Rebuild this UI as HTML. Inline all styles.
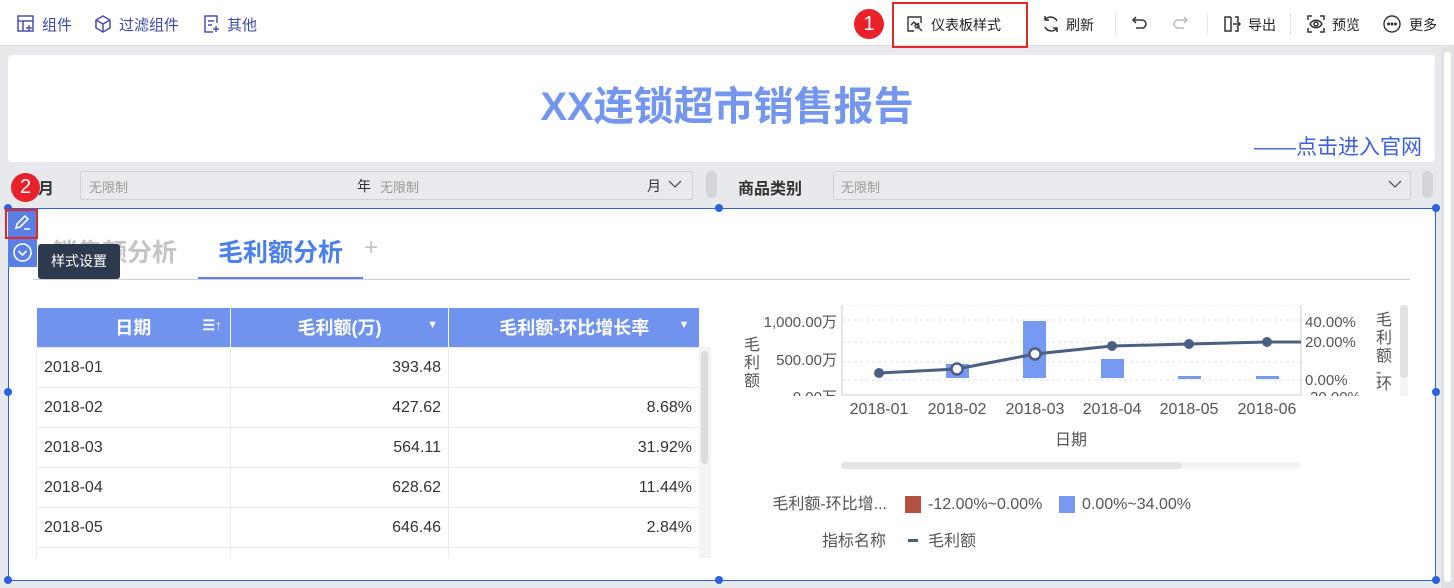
<!DOCTYPE html>
<html><head><meta charset="utf-8"><style>
*{margin:0;padding:0;box-sizing:border-box}
body{width:1454px;height:588px;background:#e8e9ed;font-family:"Liberation Sans","Noto Sans CJK SC",sans-serif;position:relative;overflow:hidden;color:#333}
.a{position:absolute;white-space:nowrap}
.tb{color:#3b4aa8;font-size:15px}
.tr{color:#222;font-size:14px}
.dot{position:absolute;width:8px;height:8px;border-radius:50%;background:#2a62e0}
td{border:1px solid #e6edf9;font-size:16px;color:#333;height:40px;padding:2px 7px 0}
</style></head><body>
<!-- toolbar -->
<div class="a" style="left:0;top:0;width:1454px;height:46px;background:#fff;border-bottom:1px solid #dcdde2"></div>
<svg class="a" style="left:17px;top:15px" width="18" height="18" viewBox="0 0 18 18" fill="none" stroke="#4a4fb0" stroke-width="1.5"><rect x="1" y="1" width="15" height="15"/><path d="M1 6h15M6 6v10M12 10v6M9 13h6"/></svg>
<div class="a tb" style="left:42px;top:14px">组件</div>
<svg class="a" style="left:94px;top:15px" width="18" height="18" viewBox="0 0 18 18" fill="none" stroke="#4a4fb0" stroke-width="1.5"><path d="M9 1l7 4v8l-7 4-7-4V5zM2 5l7 4 7-4M9 9v8"/></svg>
<div class="a tb" style="left:119px;top:14px">过滤组件</div>
<svg class="a" style="left:203px;top:15px" width="18" height="18" viewBox="0 0 18 18" fill="none" stroke="#4a4fb0" stroke-width="1.5"><path d="M14 8V1H2v16h8M5 6h6M5 10h4M13 11v6M10 14h6"/></svg>
<div class="a tb" style="left:227px;top:14px">其他</div>

<div class="a" style="left:854px;top:9px;width:30px;height:30px;border-radius:50%;background:#e8212a;color:#fff;font-size:20px;text-align:center;line-height:30px">1</div>
<div class="a" style="left:892px;top:2px;width:136px;height:46px;border:2px solid #e02a2a"></div>
<svg class="a" style="left:907px;top:16px" width="16" height="16" viewBox="0 0 16 16" fill="none" stroke="#333" stroke-width="1.4"><path d="M14 7V1H1v14h6M4 9l3-3 3 3 2-2M10 10l5 5"/><circle cx="10" cy="10" r="2"/></svg>
<div class="a tr" style="left:931px;top:15px">仪表板样式</div>
<svg class="a" style="left:1042px;top:15px" width="18" height="18" viewBox="0 0 18 18" fill="none" stroke="#333" stroke-width="1.5"><path d="M15 6A7 7 0 0 0 3 5M3 12a7 7 0 0 0 12 1M3 1v4h4M15 17v-4h-4"/></svg>
<div class="a tr" style="left:1066px;top:15px">刷新</div>
<div class="a" style="left:1115px;top:13px;width:1px;height:22px;background:#e4e4e4"></div>
<svg class="a" style="left:1131px;top:15px" width="18" height="18" viewBox="0 0 18 18" fill="none" stroke="#333" stroke-width="1.5"><path d="M5 2L2 5l3 3M2 5h9a4 4 0 0 1 0 8H5"/></svg>
<svg class="a" style="left:1171px;top:15px" width="18" height="18" viewBox="0 0 18 18" fill="none" stroke="#bbb" stroke-width="1.5"><path d="M13 2l3 3-3 3M16 5H7a4 4 0 0 0 0 8h6"/></svg>
<div class="a" style="left:1207px;top:13px;width:1px;height:22px;background:#e4e4e4"></div>
<svg class="a" style="left:1224px;top:15px" width="18" height="18" viewBox="0 0 18 18" fill="none" stroke="#333" stroke-width="1.5"><path d="M7 2H1v14h6V2M11 2h3v4M14 12v4h-3M9 9h7M13 6l3 3-3 3"/></svg>
<div class="a tr" style="left:1248px;top:15px">导出</div>
<div class="a" style="left:1290px;top:13px;width:1px;height:22px;background:#e4e4e4"></div>
<svg class="a" style="left:1307px;top:15px" width="18" height="18" viewBox="0 0 18 18" fill="none" stroke="#333" stroke-width="1.5"><path d="M1 5V1h4M13 1h4v4M17 13v4h-4M5 17H1v-4M3 9c3-5 9-5 12 0-3 5-9 5-12 0z"/><circle cx="9" cy="9" r="2"/></svg>
<div class="a tr" style="left:1332px;top:15px">预览</div>
<svg class="a" style="left:1383px;top:15px" width="18" height="18" viewBox="0 0 18 18" fill="none" stroke="#333" stroke-width="1.4"><circle cx="9" cy="9" r="8"/><circle cx="5.5" cy="9" r=".8" fill="#333"/><circle cx="9" cy="9" r=".8" fill="#333"/><circle cx="12.5" cy="9" r=".8" fill="#333"/></svg>
<div class="a tr" style="left:1409px;top:15px">更多</div>
<div class="a" style="left:1441px;top:47px;width:13px;height:541px;background:#dfe0e4"></div>
<div class="a" style="left:1444px;top:52px;width:7px;height:530px;background:#fff;border-radius:3px"></div>

<!-- title -->
<div class="a" style="left:8px;top:55px;width:1427px;height:107px;background:#fff;border-radius:4px"></div>
<div class="a" style="left:0;width:1454px;top:74px;text-align:center;font-size:40px;font-weight:bold;color:#7496ee">XX连锁超市销售报告</div>
<div class="a" style="right:32px;top:131px;font-size:21px;color:#3a5fe0">——点击进入官网</div>

<!-- filters -->
<div class="a" style="left:38px;top:175px;font-size:16px;font-weight:bold;color:#333">月</div>
<div class="a" style="left:80px;top:171px;width:613px;height:29px;border:1px solid #cfd1d6;border-radius:2px;background:#e9eaed"></div>
<div class="a" style="left:89px;top:177px;font-size:13px;color:#999">无限制</div>
<div class="a" style="left:357px;top:176px;font-size:14px;color:#333">年</div>
<div class="a" style="left:380px;top:177px;font-size:13px;color:#999">无限制</div>
<div class="a" style="left:647px;top:176px;font-size:14px;color:#333">月</div>
<svg class="a" style="left:668px;top:178px" width="14" height="12" viewBox="0 0 14 12" fill="none" stroke="#555" stroke-width="1.3"><path d="M1 3l6 6 6-6"/></svg>
<div class="a" style="left:706px;top:171px;width:11px;height:27px;border-radius:6px;background:#d4d5d9"></div>
<div class="a" style="left:738px;top:175px;font-size:16px;font-weight:bold;color:#333">商品类别</div>
<div class="a" style="left:833px;top:171px;width:578px;height:29px;border:1px solid #cfd1d6;border-radius:2px;background:#e9eaed"></div>
<div class="a" style="left:841px;top:177px;font-size:13px;color:#999">无限制</div>
<svg class="a" style="left:1388px;top:178px" width="14" height="12" viewBox="0 0 14 12" fill="none" stroke="#555" stroke-width="1.3"><path d="M1 3l6 6 6-6"/></svg>
<div class="a" style="left:1422px;top:171px;width:11px;height:27px;border-radius:6px;background:#d4d5d9"></div>
<div class="a" style="left:11px;top:173px;width:29px;height:29px;border-radius:50%;background:#e8212a;color:#fff;font-size:20px;text-align:center;line-height:29px">2</div>

<!-- main panel -->
<div class="a" style="left:8px;top:208px;width:1428px;height:373px;background:#fff;border:1px solid #2a62e0"></div>
<div class="dot" style="left:4px;top:204px"></div><div class="dot" style="left:715px;top:204px"></div><div class="dot" style="left:1432px;top:204px"></div>
<div class="dot" style="left:4px;top:388px"></div><div class="dot" style="left:1432px;top:388px"></div>
<div class="dot" style="left:4px;top:576px"></div><div class="dot" style="left:715px;top:576px"></div><div class="dot" style="left:1432px;top:576px"></div>

<!-- tabs -->
<div class="a" style="left:52px;top:233px;font-size:25px;font-weight:bold;color:#c4c4c4">销售额分析</div>
<div class="a" style="left:218px;top:233px;font-size:25px;font-weight:bold;color:#4a80ec">毛利额分析</div>
<div class="a" style="left:364px;top:234px;font-size:24px;color:#c4c4c4">+</div>
<div class="a" style="left:33px;top:279px;width:1377px;height:1px;background:#d0d0d0"></div>
<div class="a" style="left:198px;top:277px;width:165px;height:2px;background:#5a86ec"></div>

<!-- edit buttons & tooltip -->
<div class="a" style="left:8px;top:209px;width:29px;height:58px;background:#5a80e6"></div>
<div class="a" style="left:5px;top:209px;width:33px;height:30px;border:2px solid #e02a2a"></div>
<svg class="a" style="left:13px;top:213px" width="20" height="20" viewBox="0 0 20 20" fill="none" stroke="#fff" stroke-width="1.6"><path d="M3 15l1-4 8-8 3 3-8 8zM11 16h6"/></svg>
<svg class="a" style="left:12px;top:242px" width="21" height="21" viewBox="0 0 21 21" fill="none" stroke="#fff" stroke-width="1.6"><circle cx="10.5" cy="10.5" r="8.5"/><path d="M6.5 9l4 4 4-4"/></svg>
<div class="a" style="left:38px;top:244px;width:82px;height:35px;background:#2d3a4e;border-radius:3px;color:#fff;font-size:14px;line-height:35px;text-align:center">样式设置</div>

<!-- table -->
<div class="a" style="left:36px;top:308px;width:663px;height:250px;overflow:hidden">
<table style="border-collapse:collapse;width:663px;table-layout:fixed">
<colgroup><col style="width:194px"><col style="width:218px"><col style="width:251px"></colgroup>
<tr style="background:#7093ee;color:#fff;font-weight:bold;font-size:18px;height:39px">
<th style="position:relative;border-right:1px solid #fff">日期<span style="position:absolute;right:8px;top:9px;font-size:14px">☰↑</span></th>
<th style="position:relative;border-right:1px solid #fff">毛利额(万)<span style="position:absolute;right:10px;top:11px;font-size:11px">▼</span></th>
<th style="position:relative">毛利额-环比增长率<span style="position:absolute;right:10px;top:11px;font-size:11px">▼</span></th></tr>
<tr><td>2018-01</td><td style="text-align:right">393.48</td><td></td></tr>
<tr><td>2018-02</td><td style="text-align:right">427.62</td><td style="text-align:right">8.68%</td></tr>
<tr><td>2018-03</td><td style="text-align:right">564.11</td><td style="text-align:right">31.92%</td></tr>
<tr><td>2018-04</td><td style="text-align:right">628.62</td><td style="text-align:right">11.44%</td></tr>
<tr><td>2018-05</td><td style="text-align:right">646.46</td><td style="text-align:right">2.84%</td></tr>
<tr><td></td><td></td><td></td></tr>
</table></div>
<div class="a" style="left:699px;top:347px;width:12px;height:211px;background:#f3f3f4"></div>
<div class="a" style="left:701px;top:351px;width:7px;height:113px;background:#dcdcdf;border-radius:4px"></div>

<!-- chart -->
<svg class="a" style="left:730px;top:295px" width="700" height="280" viewBox="730 295 700 280" font-family="Liberation Sans,Noto Sans CJK SC,sans-serif">
<defs><clipPath id="c"><rect x="730" y="305" width="680" height="91"/></clipPath></defs>
<g clip-path="url(#c)">
<rect x="842" y="305" width="459" height="90" fill="none" stroke="#e2e2e2" stroke-dasharray="3 3"/>
<g stroke="#e2e2e2" stroke-dasharray="3 3"><line x1="842" y1="320" x2="1301" y2="320"/><line x1="842" y1="342" x2="1301" y2="342"/><line x1="842" y1="362" x2="1301" y2="362"/><line x1="842" y1="380" x2="1301" y2="380"/></g>
<line x1="842" y1="305" x2="842" y2="395" stroke="#ccc"/><line x1="842" y1="395" x2="1301" y2="395" stroke="#ccc"/><line x1="1301" y1="305" x2="1301" y2="395" stroke="#ccc"/>
<g fill="#7699f2"><rect x="946" y="364" width="23" height="14"/><rect x="1023" y="321" width="23" height="57"/><rect x="1101" y="359" width="23" height="19"/><rect x="1178" y="376" width="23" height="3"/><rect x="1256" y="376" width="23" height="3"/></g>
<polyline points="879,373 957,369 1035,354 1112,346 1189,344 1267,342 1301,342" fill="none" stroke="#4b5f82" stroke-width="3"/>
<g fill="#4b5f82"><circle cx="879" cy="373" r="5"/><circle cx="1112" cy="346" r="5"/><circle cx="1189" cy="344" r="5"/><circle cx="1267" cy="342" r="5"/></g>
<g fill="#fff" stroke="#4b5f82" stroke-width="2.5"><circle cx="957" cy="369" r="5.5"/><circle cx="1035" cy="354" r="5.5"/></g>
<g font-size="15" fill="#555" text-anchor="end"><text x="837" y="327">1,000.00万</text><text x="837" y="365">500.00万</text><text x="837" y="402">0.00万</text></g>
<g font-size="15" fill="#555"><text x="1305" y="327">40.00%</text><text x="1305" y="347">20.00%</text><text x="1305" y="385">0.00%</text><text x="1305" y="402">-20.00%</text></g>
<g font-size="16" fill="#555"><text x="1376" y="325">毛</text><text x="1376" y="343">利</text><text x="1376" y="361">额</text><text x="1376" y="377">-</text><text x="1376" y="389">环</text></g>
</g>
<g font-size="16" fill="#555"><text x="744" y="350">毛</text><text x="744" y="368">利</text><text x="744" y="386">额</text></g>
<rect x="1400" y="305" width="8" height="91" fill="#f5f5f5"/><rect x="1400" y="305" width="8" height="73" rx="4" fill="#e1e1e4"/>
<g font-size="16" fill="#555" text-anchor="middle"><text x="879" y="414">2018-01</text><text x="957" y="414">2018-02</text><text x="1035" y="414">2018-03</text><text x="1112" y="414">2018-04</text><text x="1189" y="414">2018-05</text><text x="1267" y="414">2018-06</text><text x="1071" y="445">日期</text></g>
<rect x="841" y="462" width="460" height="7" rx="3.5" fill="#f4f4f6"/><rect x="841" y="462" width="341" height="7" rx="3.5" fill="#e3e4e8"/>
<g font-size="16" fill="#555"><text x="887" y="509" text-anchor="end">毛利额-环比增...</text><text x="928" y="509">-12.00%~0.00%</text><text x="1082" y="509">0.00%~34.00%</text><text x="886" y="546" text-anchor="end">指标名称</text><text x="928" y="546">毛利额</text></g>
<rect x="905" y="496" width="16" height="17" fill="#b45142"/><rect x="1059" y="496" width="16" height="17" fill="#7699f2"/>
<rect x="908" y="539" width="10" height="3" fill="#4b5f82"/>
</svg>
</body></html>
